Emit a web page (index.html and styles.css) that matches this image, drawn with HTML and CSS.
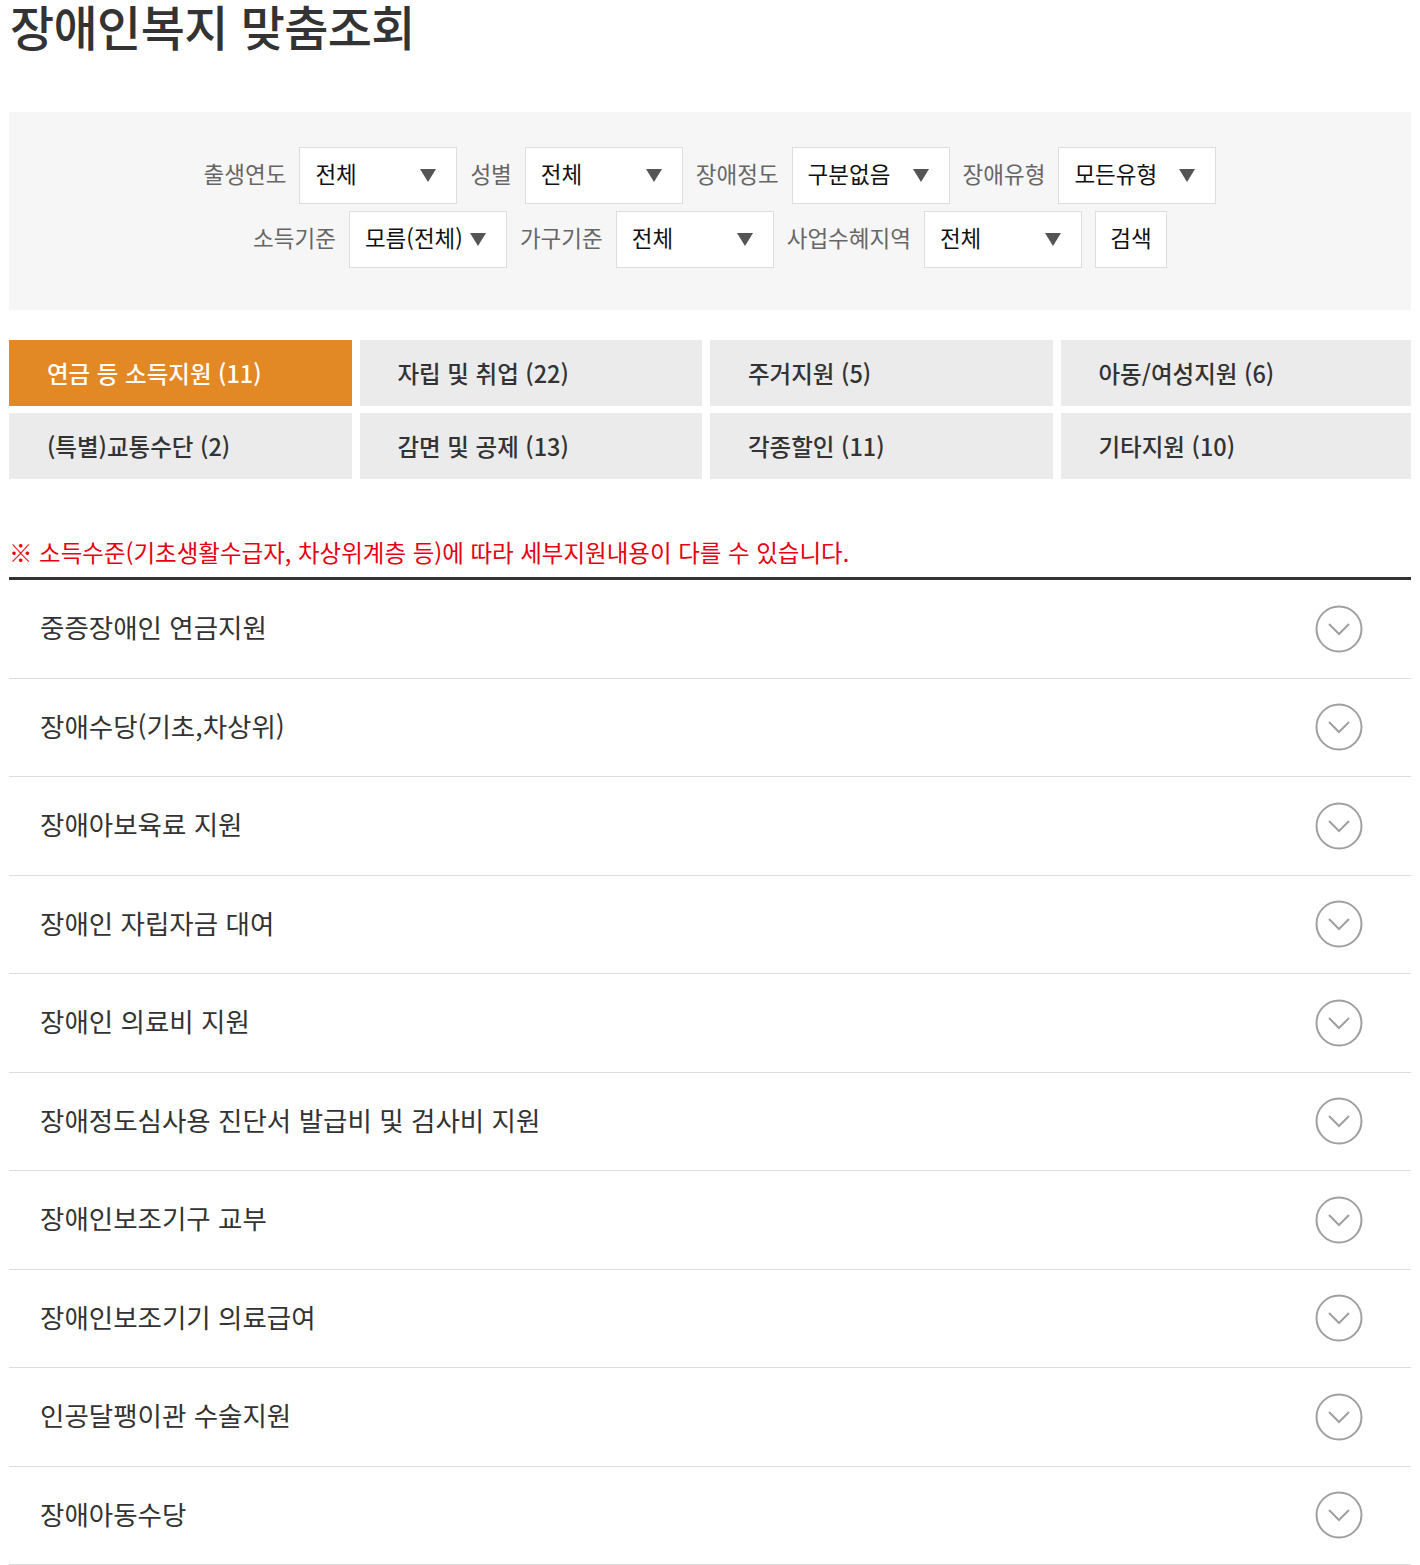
FILE: index.html
```html
<!DOCTYPE html>
<html lang="ko">
<head>
  <meta charset="UTF-8" />
  <title>장애인복지 맞춤조회</title>
  <link rel="stylesheet" href="styles.css">
</head>
<body>

  <h1 class="page-title">장애인복지 맞춤조회</h1>

  <div class="search-box">
    <div class="search-row">
      <span class="search-label">출생연도</span>
      <div class="select"><span>전체</span><i class="arrow"></i></div>
      <span class="search-label">성별</span>
      <div class="select"><span>전체</span><i class="arrow"></i></div>
      <span class="search-label">장애정도</span>
      <div class="select"><span>구분없음</span><i class="arrow"></i></div>
      <span class="search-label">장애유형</span>
      <div class="select"><span>모든유형</span><i class="arrow"></i></div>
    </div>
    <div class="search-row">
      <span class="search-label">소득기준</span>
      <div class="select"><span>모름(전체)</span><i class="arrow"></i></div>
      <span class="search-label">가구기준</span>
      <div class="select"><span>전체</span><i class="arrow"></i></div>
      <span class="search-label">사업수혜지역</span>
      <div class="select"><span>전체</span><i class="arrow"></i></div>
      <button class="search-btn">검색</button>
    </div>
  </div>

  <ul class="tabs">
    <li class="tab active"><a href="#">연금 등 소득지원 (11)</a></li>
    <li class="tab"><a href="#">자립 및 취업 (22)</a></li>
    <li class="tab"><a href="#">주거지원 (5)</a></li>
    <li class="tab"><a href="#">아동/여성지원 (6)</a></li>
    <li class="tab"><a href="#">(특별)교통수단 (2)</a></li>
    <li class="tab"><a href="#">감면 및 공제 (13)</a></li>
    <li class="tab"><a href="#">각종할인 (11)</a></li>
    <li class="tab"><a href="#">기타지원 (10)</a></li>
  </ul>

  <p class="notice">※ 소득수준(기초생활수급자, 차상위계층 등)에 따라 세부지원내용이 다를 수 있습니다.</p>

  <ul class="result-list">
    <li class="result-item"><span>중증장애인 연금지원</span><svg class="toggle" viewBox="0 0 48 48"><circle cx="24" cy="24" r="22.5"/><polyline points="14,19 24,29 34,19"/></svg></li>
    <li class="result-item"><span>장애수당(기초,차상위)</span><svg class="toggle" viewBox="0 0 48 48"><circle cx="24" cy="24" r="22.5"/><polyline points="14,19 24,29 34,19"/></svg></li>
    <li class="result-item"><span>장애아보육료 지원</span><svg class="toggle" viewBox="0 0 48 48"><circle cx="24" cy="24" r="22.5"/><polyline points="14,19 24,29 34,19"/></svg></li>
    <li class="result-item"><span>장애인 자립자금 대여</span><svg class="toggle" viewBox="0 0 48 48"><circle cx="24" cy="24" r="22.5"/><polyline points="14,19 24,29 34,19"/></svg></li>
    <li class="result-item"><span>장애인 의료비 지원</span><svg class="toggle" viewBox="0 0 48 48"><circle cx="24" cy="24" r="22.5"/><polyline points="14,19 24,29 34,19"/></svg></li>
    <li class="result-item"><span>장애정도심사용 진단서 발급비 및 검사비 지원</span><svg class="toggle" viewBox="0 0 48 48"><circle cx="24" cy="24" r="22.5"/><polyline points="14,19 24,29 34,19"/></svg></li>
    <li class="result-item"><span>장애인보조기구 교부</span><svg class="toggle" viewBox="0 0 48 48"><circle cx="24" cy="24" r="22.5"/><polyline points="14,19 24,29 34,19"/></svg></li>
    <li class="result-item"><span>장애인보조기기 의료급여</span><svg class="toggle" viewBox="0 0 48 48"><circle cx="24" cy="24" r="22.5"/><polyline points="14,19 24,29 34,19"/></svg></li>
    <li class="result-item"><span>인공달팽이관 수술지원</span><svg class="toggle" viewBox="0 0 48 48"><circle cx="24" cy="24" r="22.5"/><polyline points="14,19 24,29 34,19"/></svg></li>
    <li class="result-item"><span>장애아동수당</span><svg class="toggle" viewBox="0 0 48 48"><circle cx="24" cy="24" r="22.5"/><polyline points="14,19 24,29 34,19"/></svg></li>
  </ul>

</body>
</html>
```

FILE: styles.css
```css
body {
  font-family: "Noto Sans CJK KR", "Noto Sans", sans-serif;
  margin: 0;
  padding: 0 9px;
  background-color: #fff;
  color: #333;
}

.page-title {
  margin: 0 0 62px 1px;
  font-size: 48px;
  line-height: 50px;
  font-weight: 500;
  letter-spacing: -0.6px;
  color: #333;
}

/* search filters */
.search-box {
  background-color: #f6f6f6;
  padding: 35px 0 42px;
  display: flex;
  flex-direction: column;
  gap: 7px;
}

.search-row {
  display: flex;
  justify-content: center;
  align-items: center;
  gap: 13px;
}

.search-label {
  font-size: 22.5px;
  color: #666;
  padding-bottom: 5px;
}

.select {
  width: 158px;
  height: 57px;
  box-sizing: border-box;
  background: #fff;
  border: 1px solid #ddd;
  padding: 0 20px 0 15px;
  display: flex;
  align-items: center;
  justify-content: space-between;
  font-size: 22.5px;
  color: #111;
}

.select span {
  padding-bottom: 5px;
}

.select .arrow {
  display: block;
  width: 0;
  height: 0;
  border-left: 8px solid transparent;
  border-right: 8px solid transparent;
  border-top: 13px solid #555;
}

.search-btn {
  width: 72px;
  height: 57px;
  background: #fff;
  border: 1px solid #ddd;
  font-family: inherit;
  font-size: 22.5px;
  color: #111;
  padding: 0 0 5px;
  cursor: pointer;
}

/* category tabs */
.tabs {
  list-style: none;
  margin: 30px 0 0;
  padding: 0;
  display: grid;
  grid-template-columns: repeat(4, 1fr);
  row-gap: 7px;
}

.tab {
  padding-right: 8px;
}

.tab:nth-child(4n) {
  padding-right: 0;
}

.tab a {
  display: flex;
  align-items: center;
  height: 66px;
  padding-left: 38px;
  background-color: #ebebeb;
  color: #333;
  font-size: 23.5px;
  font-weight: 500;
  text-decoration: none;
}

.tab.active a {
  background-color: #e28825;
  color: #fff;
}

.notice {
  margin: 58px 0 10px;
  font-size: 23.5px;
  line-height: 30px;
  color: #e60012;
}

/* result list */
.result-list {
  list-style: none;
  margin: 0;
  padding: 0;
  border-top: 3px solid #333;
}

.result-item {
  height: 98.5px;
  box-sizing: border-box;
  border-bottom: 1px solid #ddd;
  display: flex;
  align-items: center;
  justify-content: space-between;
  padding: 0 48px 0 31px;
  font-size: 26.5px;
  color: #333;
}

.result-item span {
  padding-bottom: 4px;
}

.toggle {
  width: 48px;
  height: 48px;
  fill: none;
  stroke: #a0a0a0;
  stroke-width: 2;
}
```
